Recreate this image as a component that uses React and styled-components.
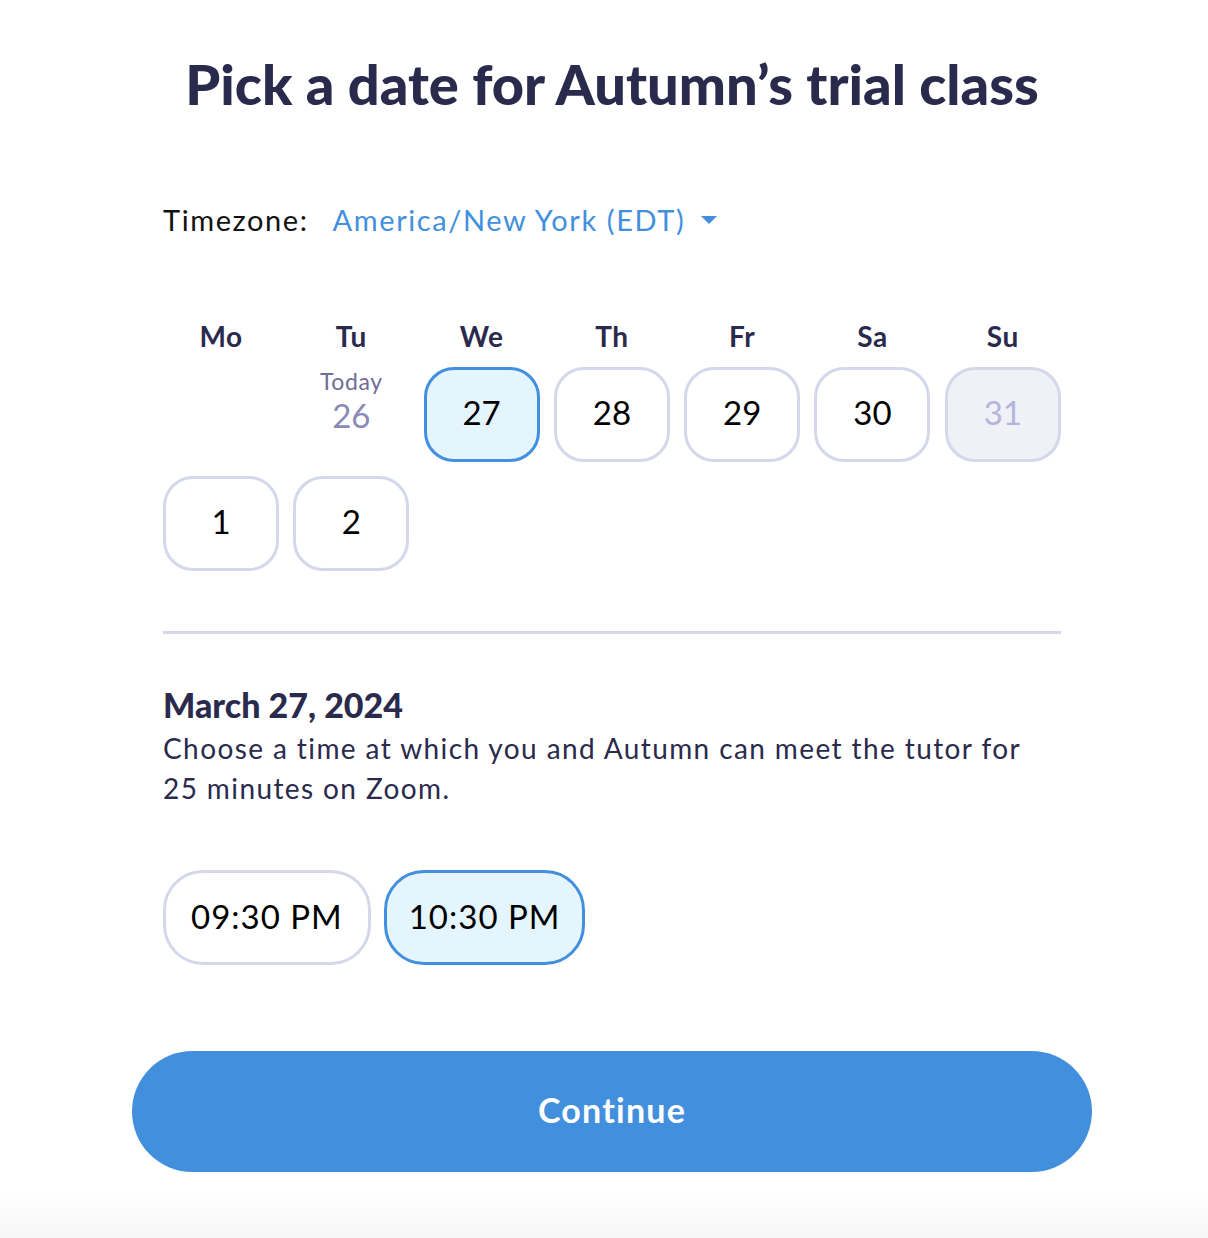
import React from "react";
import styled, { createGlobalStyle } from "styled-components";

const GlobalStyle = createGlobalStyle`
  html, body {
    margin: 0;
    padding: 0;
    background: #fff;
  }
  body {
    font-family: "Lato", "Noto Sans", sans-serif;
    color: #2a2a4d;
  }
`;

const Page = styled.div`
  min-height: 1238px;
  padding-left: 16px;
  box-sizing: border-box;
  background: linear-gradient(to bottom, #fff 0, #fff 1195px, #f6f6f7 1238px);
`;

const Content = styled.div`
  width: 898px;
  margin: 0 auto;
  padding-top: 52px;
  display: flex;
  flex-direction: column;
`;

const Title = styled.h1`
  margin: 0;
  text-align: center;
  white-space: nowrap;
  font-size: 56px;
  font-weight: 900;
  letter-spacing: 0;
  line-height: 64px;
  color: #2a2a4d;
`;

const TimezoneRow = styled.div`
  display: flex;
  align-items: center;
  margin-top: 84px;
  font-size: 29px;
  letter-spacing: 1.6px;
  line-height: 40px;
`;

const TimezoneLabel = styled.span`
  color: #111;
  margin-right: 24px;
`;

const TimezoneLink = styled.button`
  display: flex;
  align-items: center;
  gap: 16px;
  border: none;
  background: none;
  padding: 0;
  font: inherit;
  letter-spacing: inherit;
  color: #4290dd;
  cursor: pointer;
`;

const Caret = styled.span`
  width: 0;
  height: 0;
  border-left: 8px solid transparent;
  border-right: 8px solid transparent;
  border-top: 8px solid #4290dd;
`;

const Calendar = styled.div`
  display: grid;
  grid-template-columns: repeat(7, 116px);
  column-gap: 14.3px;
  row-gap: 14px;
  margin-top: 78px;
`;

const DayName = styled.div`
  text-align: center;
  font-size: 28px;
  font-weight: 700;
  letter-spacing: 0.5px;
  line-height: 36px;
  color: #2a2a4d;
  margin-bottom: -1px;
`;

const TodayCell = styled.div`
  height: 95px;
  display: flex;
  flex-direction: column;
  align-items: center;
`;

const TodayLabel = styled.span`
  font-size: 23px;
  letter-spacing: 0.6px;
  line-height: 28px;
  color: #6f6d98;
`;

const TodayNumber = styled.span`
  font-size: 33px;
  line-height: 40px;
  color: #8b89b6;
`;

const DayButton = styled.button`
  height: 95px;
  box-sizing: border-box;
  border-radius: 30px;
  border: 3px solid ${(p) => (p.$selected ? "#4290dd" : "#d5d7ea")};
  background: ${(p) =>
    p.$selected ? "#e4f5fd" : p.$disabled ? "#f0f1f7" : "#fff"};
  color: ${(p) => (p.$disabled ? "#b3b5dc" : "#000")};
  font-family: inherit;
  font-size: 33px;
  padding: 0 0 5px;
  cursor: pointer;
`;

const Divider = styled.hr`
  border: none;
  height: 3px;
  background: #d5d7ea;
  margin: 60px 0 0;
`;

const DateHeading = styled.h2`
  margin: 49px 0 0;
  font-size: 34px;
  font-weight: 900;
  line-height: 44px;
  color: #2a2a4d;
`;

const Description = styled.p`
  margin: 1px 0 0;
  font-size: 28px;
  letter-spacing: 1.4px;
  line-height: 40px;
  color: #2a2a4d;
`;

const Times = styled.div`
  display: flex;
  gap: 13px;
  margin-top: 62px;
`;

const TimeButton = styled.button`
  height: 95px;
  padding: 0 ${(p) => (p.$narrow ? 22 : 25)}px 4px;
  box-sizing: border-box;
  border-radius: 40px;
  border: 3px solid ${(p) => (p.$selected ? "#4290dd" : "#d5d7ea")};
  background: ${(p) => (p.$selected ? "#e4f5fd" : "#fff")};
  color: #000;
  font-family: inherit;
  font-size: 33px;
  letter-spacing: 1px;
  cursor: pointer;
`;

const ContinueButton = styled.button`
  margin: 86px -31px 0;
  height: 121px;
  padding: 0 0 5px;
  border: none;
  border-radius: 61px;
  background: #4290dd;
  color: #fff;
  font-family: inherit;
  font-size: 34px;
  font-weight: 700;
  letter-spacing: 1.2px;
  cursor: pointer;
`;

const days = ["Mo", "Tu", "We", "Th", "Fr", "Sa", "Su"];
const dates = [
  { n: 27, selected: true },
  { n: 28 },
  { n: 29 },
  { n: 30 },
  { n: 31, disabled: true },
  { n: 1 },
  { n: 2 },
];

export default function App() {
  return (
    <Page>
      <GlobalStyle />
      <Content>
        <Title>Pick a date for Autumn’s trial class</Title>
        <TimezoneRow>
          <TimezoneLabel>Timezone:</TimezoneLabel>
          <TimezoneLink>
            America/New York (EDT)
            <Caret />
          </TimezoneLink>
        </TimezoneRow>
        <Calendar>
          {days.map((d) => (
            <DayName key={d}>{d}</DayName>
          ))}
          <div />
          <TodayCell>
            <TodayLabel>Today</TodayLabel>
            <TodayNumber>26</TodayNumber>
          </TodayCell>
          {dates.map((d) => (
            <DayButton key={d.n} $selected={d.selected} $disabled={d.disabled}>
              {d.n}
            </DayButton>
          ))}
        </Calendar>
        <Divider />
        <DateHeading>March 27, 2024</DateHeading>
        <Description>
          Choose a time at which you and Autumn can meet the tutor for 25
          minutes on Zoom.
        </Description>
        <Times>
          <TimeButton>09:30 PM</TimeButton>
          <TimeButton $selected $narrow>
            10:30 PM
          </TimeButton>
        </Times>
        <ContinueButton>Continue</ContinueButton>
      </Content>
    </Page>
  );
}
